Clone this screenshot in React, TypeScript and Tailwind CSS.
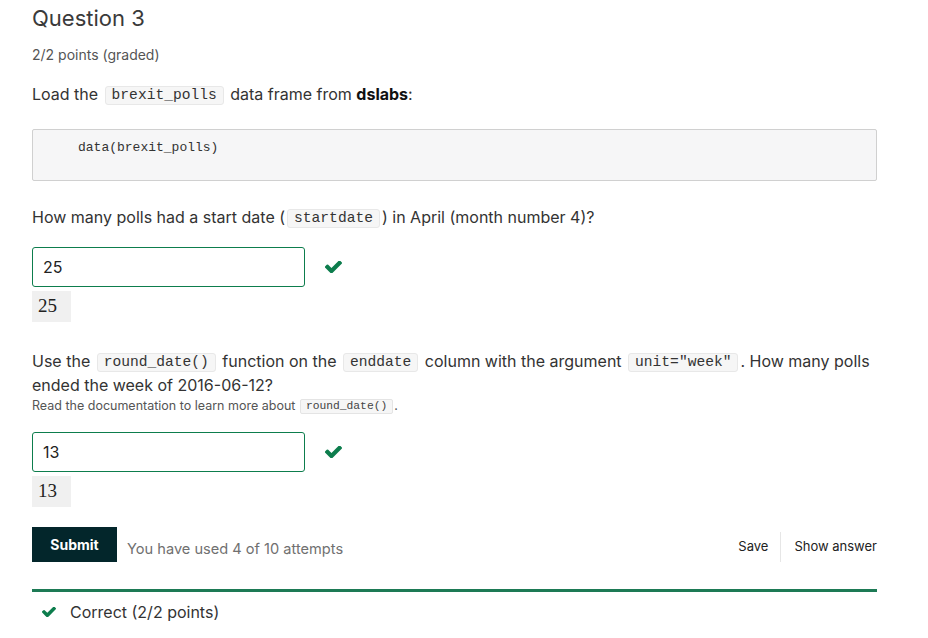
const Check = ({ className = "" }: { className?: string }) => (
  <svg viewBox="128 400 1543 1060" className={className} fill="currentColor" aria-hidden="true">
    <path d="M1671 566q0 40-28 68l-724 724-136 136q-28 28-68 28t-68-28l-136-136-362-362q-28-28-28-68t28-68l136-136q28-28 68-28t68 28l294 295 656-657q28-28 68-28t68 28l136 136q28 28 28 68z" />
  </svg>
);

const Code = ({ children, small }: { children: React.ReactNode; small?: boolean }) => (
  <code
    className={
      small
        ? "mx-[1px] inline-block rounded-[2px] border border-[#e4e4e4] bg-[#f6f6f6] px-[5px] align-middle text-[11.3px] leading-[13px] text-[#444] [font-family:'Liberation_Mono',monospace]"
        : "mx-[2px] inline-block rounded-[3px] border border-[#e8e8e8] bg-[#f6f6f6] px-[6px] align-middle text-[14.6px] leading-[17px] text-[#333] [font-family:'Liberation_Mono',monospace]"
    }
  >
    {children}
  </code>
);

const Answer = ({ value }: { value: string }) => (
  <>
    <div className="mt-[18px] flex items-center">
      <input
        readOnly
        value={value}
        className="h-[40px] w-[273px] rounded-[3px] border border-[#0d7d4d] px-[10px] text-[16px] text-[#222] outline-none"
      />
      <Check className="ml-[20px] h-[12px] w-[17px] text-[#0d7d4d]" />
    </div>
    <div className="mt-[4px] flex h-[31px] w-[39px] items-center bg-[#f0f0f0] pl-[6px] text-[19px] text-[#222] [font-family:'Liberation_Serif',serif]">
      {value}
    </div>
  </>
);

export default function App() {
  return (
    <div className="min-h-screen bg-white [font-family:Inter,sans-serif] text-[#333]">
      <div className="ml-[32px] w-[845px]">
        <h2 className="mt-[5px] text-[22px] leading-[26px] font-normal text-[#3a3a3a]">Question 3</h2>
        <div className="mt-[14px] text-[14px] leading-[20px] text-[#555]">2/2 points (graded)</div>

        <p className="mt-[17px] text-[16px] leading-[24px]">
          Load the <Code>brexit_polls</Code> data frame from <b className="font-bold text-[#111]">dslabs</b>:
        </p>

        <pre className="mt-[23px] h-[52px] rounded-[2px] border border-[#d0d0d0] bg-[#f6f6f7] pl-[45px] pt-[10px] text-[13px] leading-[16px] text-[#333] [font-family:'Liberation_Mono',monospace]">
          data(brexit_polls)
        </pre>

        <p className="mt-[24px] text-[16px] leading-[24px]">
          How many polls had a start date (<Code>startdate</Code>) in April (month number 4)?
        </p>

        <Answer value="25" />

        <p className="mt-[27px] whitespace-nowrap text-[16px] leading-[24px]">
          Use the <Code>round_date()</Code> function on the <Code>enddate</Code> column with the argument{" "}
          <Code>unit="week"</Code>. How many polls
          <br />
          ended the week of 2016-06-12?
        </p>
        <p className="mt-[1px] text-[12.5px] leading-[16px] text-[#555]">
          Read the documentation to learn more about <Code small>round_date()</Code>.
        </p>

        <div className="mt-[3px]">
          <Answer value="13" />
        </div>

        <div className="mt-[20px] flex items-center">
          <button className="h-[35px] w-[85px] bg-[#03262b] text-[14px] font-bold text-white">Submit</button>
          <span className="ml-[10px] mt-[10px] text-[14.6px] text-[#707070]">You have used 4 of 10 attempts</span>
          <div className="ml-auto mt-[4px] flex items-center text-[13px] text-[#222]">
            <span className="pr-[12px]">Save</span>
            <span className="h-[30px] w-px bg-[#e6e6e6]" />
            <span className="pl-[13px]">Show answer</span>
          </div>
        </div>

        <div className="mt-[27px] border-t-[3px] border-[#1d7a55]" />
        <div className="mt-[8px] flex items-center text-[16px] leading-[24px]">
          <Check className="ml-[10px] h-[10px] w-[14px] text-[#0d7d4d]" />
          <span className="ml-[14px]">Correct (2/2 points)</span>
        </div>
      </div>
    </div>
  );
}
